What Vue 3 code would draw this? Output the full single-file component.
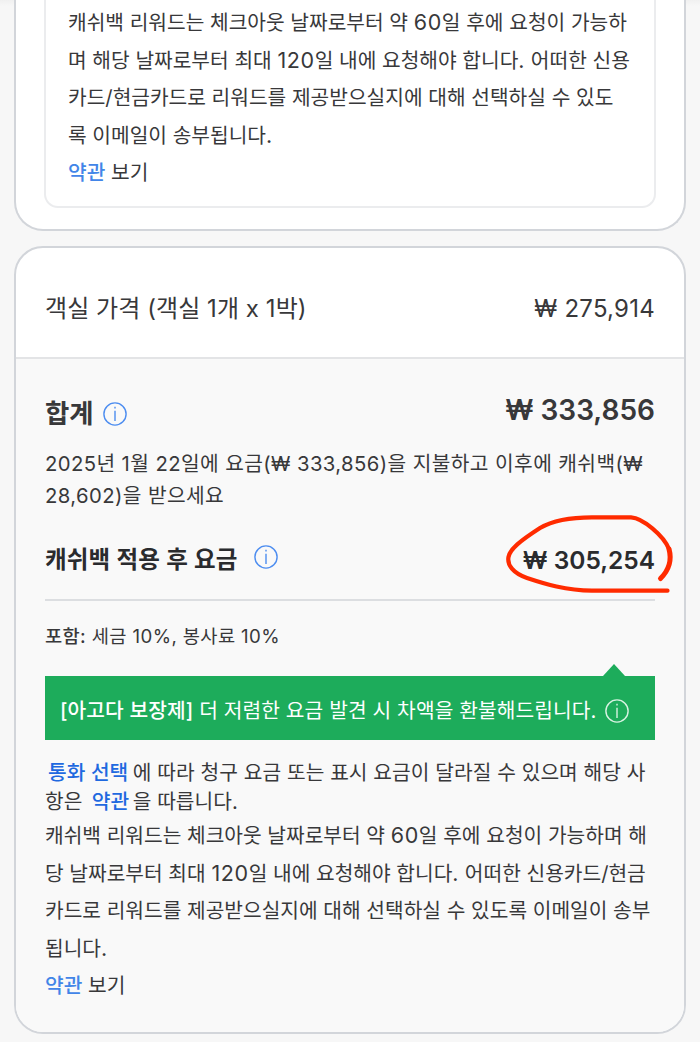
<template>
  <main class="page">
    <section class="card card-top">
      <div class="notice">
        <p v-for="line in rewardLines" :key="line" class="line">
          <span v-for="(part, i) in split(line)" :key="i" :class="{ num: i % 2 }">{{ part }}</span>
        </p>
        <p class="line"><a class="link">약관</a> 보기</p>
      </div>
    </section>

    <section class="card card-price">
      <div class="room">
        <span class="room-name">객실 가격 (객실 1개 x 1박)</span>
        <span class="room-price">₩ 275,914</span>
      </div>

      <div class="summary">
        <div class="total">
          <h2>합계</h2>
          <svg class="info" viewBox="0 0 24 24">
            <circle cx="12" cy="12" r="11.1" />
            <path d="M12 8.700V19" />
            <path d="M12 4.800V6.500" />
          </svg>
          <strong>₩ 333,856</strong>
        </div>

        <div class="cashback-note">
          <p>2025년 1월 22일에 요금(₩ 333,856)을 지불하고 이후에 캐쉬백(₩</p>
          <p>28,602)을 받으세요</p>
        </div>

        <div class="after">
          <h3>캐쉬백 적용 후 요금</h3>
          <svg class="info" viewBox="0 0 24 24">
            <circle cx="12" cy="12" r="11.1" />
            <path d="M12 8.700V19" />
            <path d="M12 4.800V6.500" />
          </svg>
          <strong>₩ 305,254</strong>
          <svg class="marker" viewBox="500 510 180 88">
            <path d="M667.500 590.700H592C566 590.500 545 584 527 578C513 573 507 565 508.500 557C510 549 520 541 540 528C556 518.500 575 517.300 592 517.300H631C643 518 664 536 669 549" />
            <path class="thick" d="M669 549C672 560 670 569 660.500 578.500" />
          </svg>
        </div>

        <p class="included"><b>포함:</b> 세금 10%, 봉사료 10%</p>

        <div class="guarantee">
          <p><b>[아고다 보장제]</b> 더 저렴한 요금 발견 시 차액을 환불해드립니다.</p>
          <svg class="info" viewBox="0 0 24 24">
            <circle cx="12" cy="12" r="11.1" />
            <path d="M12 8.700V19" />
            <path d="M12 4.800V6.500" />
          </svg>
        </div>

        <div class="currency">
          <p><a class="link first">통화 선택</a>에 따라 청구 요금 또는 표시 요금이 달라질 수 있으며 해당 사</p>
          <p>항은 <a class="link">약관</a>을 따릅니다.</p>
        </div>

        <div class="terms">
          <p v-for="line in termLines" :key="line" class="line">
            <span v-for="(part, i) in split(line)" :key="i" :class="{ num: i % 2 }">{{ part }}</span>
          </p>
          <p class="line"><a class="link">약관</a> 보기</p>
        </div>
      </div>
    </section>
  </main>
</template>

<script setup>
const rewardLines = [
  '캐쉬백 리워드는 체크아웃 날짜로부터 약 60일 후에 요청이 가능하',
  '며 해당 날짜로부터 최대 120일 내에 요청해야 합니다. 어떠한 신용',
  '카드/현금카드로 리워드를 제공받으실지에 대해 선택하실 수 있도',
  '록 이메일이 송부됩니다.',
];

const termLines = [
  '캐쉬백 리워드는 체크아웃 날짜로부터 약 60일 후에 요청이 가능하며 해',
  '당 날짜로부터 최대 120일 내에 요청해야 합니다. 어떠한 신용카드/현금',
  '카드로 리워드를 제공받으실지에 대해 선택하실 수 있도록 이메일이 송부',
  '됩니다.',
];

// odd parts are the digits and full stops, which are set a little larger
const split = (line) => line.split(/([\d.]+)/);
</script>

<style>
body {
  margin: 0;
  background: #f7f7f7;
}
</style>

<style scoped>
.page {
  display: flex;
  flex-direction: column;
  gap: 15px;
  box-sizing: border-box;
  height: 1042px;
  padding: 0 14px;
  overflow: hidden;
  background: linear-gradient(#f0f0f0, #f7f7f7 6px);
  color: #38383a;
  font-family: Inter, "Noto Sans CJK KR", sans-serif;
  font-size: 20.3px;
  white-space: nowrap;
}

p,
h2,
h3 {
  margin: 0;
}

.card {
  box-sizing: border-box;
  border: 2px solid #d2d5da;
  border-radius: 29px;
  background: #fff;
  overflow: hidden;
}

.card-top {
  height: 231px;
  flex-shrink: 0;
  padding: 0 28px;
  border-top: 0;
  border-radius: 0 0 29px 29px;
}

.notice {
  box-sizing: border-box;
  height: 208px;
  padding: 4px 22px 0;
  border: 2px solid #ebecee;
  border-top: 0;
  border-radius: 0 0 14px 14px;
}

.line {
  height: 37.6px;
  line-height: 38.8px;
}

.num {
  font-size: 21.5px;
  line-height: 1;
  letter-spacing: 0.6px;
}

.link {
  color: #4285e8;
  font-weight: 500;
}

.card-price {
  height: 788px;
  flex-shrink: 0;
}

.room {
  display: flex;
  justify-content: space-between;
  align-items: center;
  box-sizing: border-box;
  height: 111px;
  padding: 11px 29px 0;
  border-bottom: 2px solid #e3e4e6;
  font-size: 24px;
}

.room-name {
  margin-top: -3px;
  letter-spacing: 0.06px;
}

.room-price {
  letter-spacing: 0.25px;
}

.summary {
  height: 675px;
  padding: 0 29px;
  background: #f9f9f9;
}

.total,
.after {
  display: flex;
  align-items: center;
}

.total {
  height: 89px;
}

.info {
  width: 24px;
  height: 24px;
  fill: none;
  stroke: #4d8df0;
  stroke-width: 1.4;
}

.total h2 {
  padding-top: 16px;
  font-size: 26.4px;
  font-weight: 600;
}

.total .info {
  margin: 21px auto 0 9px;
}

.total strong {
  padding-top: 13px;
  font-size: 28px;
  font-weight: 600;
}

.cashback-note {
  letter-spacing: 0.4px;
}

.cashback-note p {
  height: 32px;
  line-height: 32px;
}

.after {
  position: relative;
  box-sizing: border-box;
  height: 89px;
  padding-top: 8px;
  border-bottom: 2px solid #dcdee1;
  color: #2a2b2e;
}

.after h3 {
  margin-top: -3px;
  font-size: 23.5px;
  font-weight: 600;
  letter-spacing: 0.17px;
}

.after .info {
  margin: -5px auto 0 16px;
}

.after strong {
  font-size: 24.5px;
  font-weight: 600;
}

.marker {
  position: absolute;
  top: -2px;
  right: -25px;
  width: 180px;
  height: 88px;
  fill: none;
  stroke: #ff2b00;
  stroke-width: 4.2;
  stroke-linecap: round;
  stroke-linejoin: round;
}

.marker .thick {
  stroke-width: 5;
}

.included {
  height: 75px;
  font-size: 18.7px;
  line-height: 72px;
  letter-spacing: 0.37px;
}

.included b,
.guarantee b {
  font-weight: 500;
}

.guarantee {
  position: relative;
  display: flex;
  align-items: center;
  height: 64px;
  padding-left: 15px;
  background: #1dac5b;
  color: #fff;
}

.guarantee::before {
  content: "";
  position: absolute;
  top: -12px;
  right: 30px;
  border: solid transparent;
  border-width: 0 11px 12px;
  border-bottom-color: #1dac5b;
}

.guarantee p {
  padding-top: 1px;
  letter-spacing: 0.11px;
}

.guarantee .info {
  margin: 5px 0 0 8px;
  stroke: #d8f3e2;
}

.currency {
  padding-top: 17px;
  letter-spacing: 0.06px;
}

.currency p {
  height: 29px;
  line-height: 31px;
}

.currency .link {
  margin: 0 3.5px;
  color: #1f69e0;
}

.currency .first {
  margin-left: 3px;
  margin-right: 4.5px;
}

.terms {
  padding-top: 2px;
}
</style>
